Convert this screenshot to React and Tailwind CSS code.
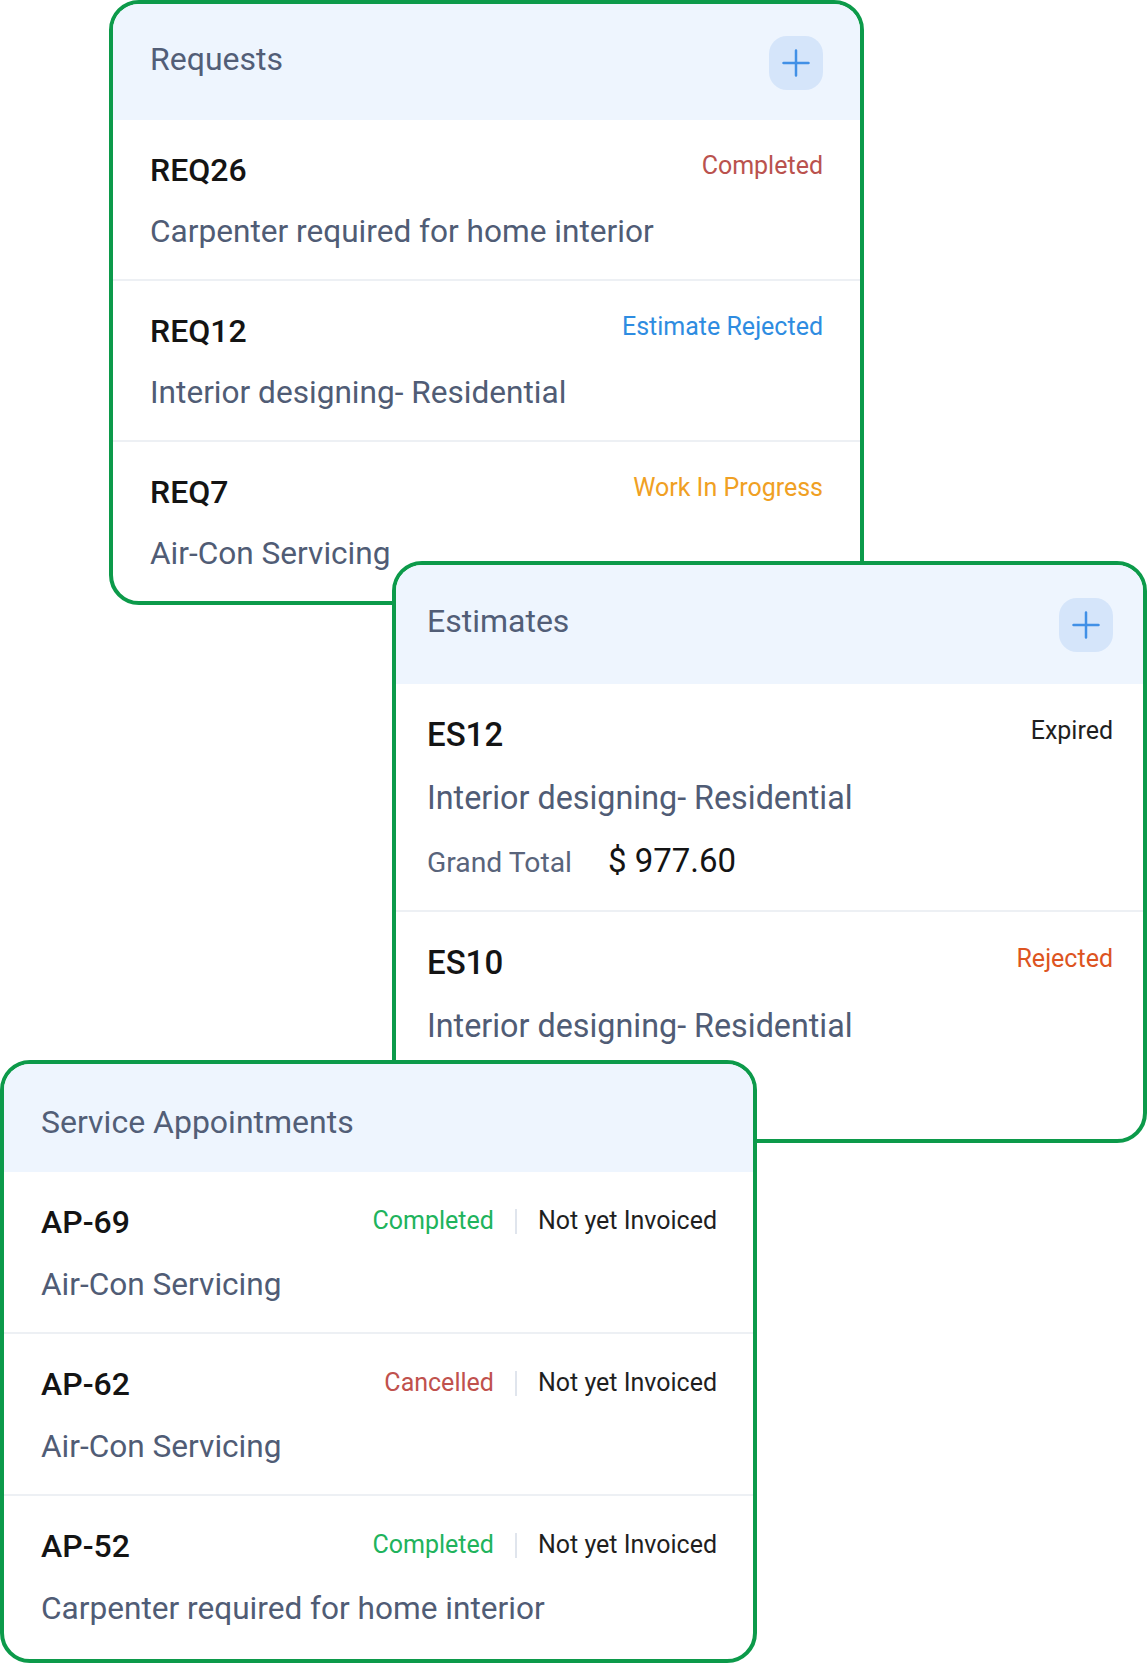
import React from "react";

const requests = [
  { id: "REQ26", desc: "Carpenter required for home interior", status: "Completed", color: "text-[#ba524e]" },
  { id: "REQ12", desc: "Interior designing- Residential", status: "Estimate Rejected", color: "text-[#2e8ce1]" },
  { id: "REQ7", desc: "Air-Con Servicing", status: "Work In Progress", color: "text-[#f0a023]" },
];

const estimates = [
  { id: "ES12", desc: "Interior designing- Residential", status: "Expired", color: "text-[#1f1f1f]", total: "$ 977.60" },
  { id: "ES10", desc: "Interior designing- Residential", status: "Rejected", color: "text-[#dd5421]", total: "$ 977.60" },
];

const appointments = [
  { id: "AP-69", desc: "Air-Con Servicing", status: "Completed", color: "text-[#20b35c]" },
  { id: "AP-62", desc: "Air-Con Servicing", status: "Cancelled", color: "text-[#c0514d]" },
  { id: "AP-52", desc: "Carpenter required for home interior", status: "Completed", color: "text-[#20b35c]" },
];

const PlusButton = () => (
  <button
    type="button"
    className="flex h-[54px] w-[54px] shrink-0 items-center justify-center rounded-[18px] bg-[#d5e5fa]"
  >
    <svg width="28" height="28" viewBox="0 0 28 28" fill="none">
      <path d="M14 1.5V26.5M1.5 14H26.5" stroke="#4190e6" strokeWidth="2.5" strokeLinecap="round" />
    </svg>
  </button>
);

// shared card shell: green outline, light blue header
const Card = ({ title, withAdd, className, headerClass, titleClass, children }) => (
  <div className={`relative overflow-hidden rounded-[30px] border-4 border-[#0c9a4a] bg-white ${className}`}>
    <div className={`flex items-start justify-between bg-[#eef5fe] ${headerClass}`}>
      <h2 className={`text-[32px] leading-[38px] font-normal text-[#525e77] ${titleClass}`}>{title}</h2>
      {withAdd && <PlusButton />}
    </div>
    {children}
  </div>
);

const Row = ({ item, rowClass, idClass, descClass, right, children }) => (
  <div className={`border-b-2 border-[#edf0f4] last:border-b-0 ${rowClass}`}>
    <div className="flex items-start justify-between">
      <span className={`leading-[38px] font-medium text-[#141414] ${idClass}`}>{item.id}</span>
      {right}
    </div>
    <p className={`text-[#505c75] ${descClass}`}>{item.desc}</p>
    {children}
  </div>
);

const Status = ({ item, className = "" }) => (
  <span className={`text-[25px] leading-[30px] ${item.color} ${className}`}>{item.status}</span>
);

export default function App() {
  return (
    <div className="flex h-[1664px] w-[1148px] flex-col overflow-hidden bg-white font-['Roboto','Liberation_Sans',sans-serif]">
      {/* Requests */}
      <Card
        title="Requests"
        withAdd
        className="ml-[109px] w-[755px]"
        headerClass="h-[116px] pt-[32px] pl-[37px] pr-[37px]"
        titleClass="mt-[4px]"
      >
        {requests.map((r) => (
          <Row
            key={r.id}
            item={r}
            rowClass="pt-[31px] pb-[29px] pl-[37px] pr-[37px]"
            idClass="text-[32px]"
            descClass="mt-[25px] text-[31.6px] leading-[36px]"
            right={<Status item={r} />}
          />
        ))}
      </Card>

      {/* Estimates */}
      <Card
        title="Estimates"
        withAdd
        className="-mt-[44px] ml-[392px] w-[755px]"
        headerClass="h-[119px] pt-[33px] pl-[31px] pr-[30px]"
        titleClass="mt-[4px]"
      >
        {estimates.map((e) => (
          <Row
            key={e.id}
            item={e}
            rowClass="pt-[32px] pb-[29px] last:pb-[30px] pl-[31px] pr-[30px]"
            idClass="text-[33px]"
            descClass="mt-[25px] text-[32.3px] leading-[38px]"
            right={<Status item={e} />}
          >
            <div className="mt-[24px] flex h-[40px] items-baseline">
              <span className="text-[28.3px] leading-[36px] text-[#59647b]">Grand Total</span>
              <span className="ml-[36px] text-[33px] leading-[40px] text-[#141414]">{e.total}</span>
            </div>
          </Row>
        ))}
      </Card>

      {/* Service Appointments */}
      <Card
        title="Service Appointments"
        className="-mt-[83px] w-[757px]"
        headerClass="h-[108px] pt-[39px] pl-[37px] pr-[36px]"
        titleClass=""
      >
        {appointments.map((a) => (
          <Row
            key={a.id}
            item={a}
            rowClass="pt-[31px] pb-[29px] last:pb-[32px] pl-[37px] pr-[36px]"
            idClass="text-[32px]"
            descClass="mt-[26px] text-[31.6px] leading-[36px]"
            right={
              <div className="mt-[3px] flex items-center">
                <Status item={a} />
                <span className="mx-[21px] h-[25px] w-[2px] bg-[#e0e5ed]" />
                <span className="text-[25px] leading-[30px] text-[#1f1f1f]">Not yet Invoiced</span>
              </div>
            }
          />
        ))}
      </Card>
    </div>
  );
}
